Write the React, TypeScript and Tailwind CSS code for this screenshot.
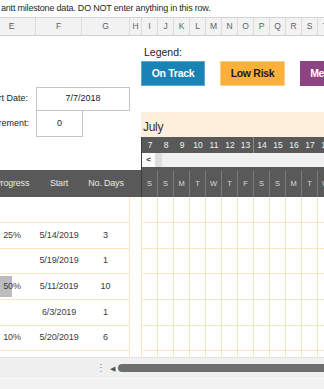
const days = [
  { n: "7", w: "S" },
  { n: "8", w: "S" },
  { n: "9", w: "M" },
  { n: "10", w: "T" },
  { n: "11", w: "W" },
  { n: "12", w: "T" },
  { n: "13", w: "F" },
  { n: "14", w: "S" },
  { n: "15", w: "S" },
  { n: "16", w: "M" },
  { n: "17", w: "T" },
  { n: "18", w: "W" },
];

const letters = ["I", "J", "K", "L", "M", "N", "O", "P", "Q", "R", "S", "T"];

const rows = [
  { p: "", s: "", d: "", bar: 0, h: "h-[26px]" },
  { p: "25%", s: "5/14/2019", d: "3", bar: 25, h: "h-[26px]" },
  { p: "", s: "5/19/2019", d: "1", bar: 0, h: "h-[25px]" },
  { p: "50%", s: "5/11/2019", d: "10", bar: 50, h: "h-[26px]" },
  { p: "", s: "6/3/2019", d: "1", bar: 0, h: "h-[26px]" },
  { p: "10%", s: "5/20/2019", d: "6", bar: 10, h: "h-[25px]" },
];

const GanttCells = () => (
  <>
    {days.map((d) => (
      <div key={d.n} className="h-full w-[16px] shrink-0 border-r border-[#fde4c4]" />
    ))}
  </>
);

const App = () => {
  return (
    <div className="relative h-[389px] w-[324px] overflow-hidden bg-white text-[#333] [font-family:'Liberation_Sans',Arial,sans-serif]">
      {/* formula bar */}
      <div className="flex h-[18px] items-center whitespace-nowrap border-b border-[#d4d4d4] pl-[1px] text-[9px] tracking-[-0.2px] text-[#1f1f1f]">
        antt milestone data. DO NOT enter anything in this row.
      </div>

      {/* column letters */}
      <div className="flex h-[18px] whitespace-nowrap border-b border-[#cfcfcf] bg-[#f2f2f2] text-[8.5px] text-[#5f5f5f]">
        <div className="-ml-[12px] flex w-[48px] shrink-0 items-center justify-center border-r border-[#dcdcdc]">E</div>
        <div className="flex w-[46px] shrink-0 items-center justify-center border-r border-[#dcdcdc]">F</div>
        <div className="flex w-[48px] shrink-0 items-center justify-center border-r border-[#dcdcdc]">G</div>
        <div className="flex w-[12px] shrink-0 items-center justify-center border-r border-[#dcdcdc]">H</div>
        {letters.map((l) => (
          <div key={l} className="flex w-[16px] shrink-0 items-center justify-center border-r border-[#dcdcdc]">
            {l}
          </div>
        ))}
      </div>

      <div className="flex">
        {/* left table */}
        <div className="-ml-[12px] flex w-[153px] shrink-0 flex-col">
          <div className="h-[51px]" />
          <div className="flex h-[24px] text-[9px] text-[#222]">
            <div className="flex w-[48px] shrink-0 items-center justify-end whitespace-nowrap pr-[8px]">Project Start Date:</div>
            <div className="flex w-[94px] shrink-0 items-center justify-center border border-[#c4c4c4]">7/7/2018</div>
          </div>
          <div className="flex h-[26px] text-[9px] text-[#222]">
            <div className="flex w-[48px] shrink-0 items-center justify-end whitespace-nowrap pr-[7px]">Scrolling Increment:</div>
            <div className="flex w-[47px] shrink-0 items-center justify-center border-x border-b border-[#c4c4c4]">0</div>
          </div>
          <div className="h-[33px]" />
          <div className="flex h-[27px] bg-[#595959] text-[9px] tracking-[-0.2px] text-[#e8e8e8]">
            <div className="flex w-[48px] shrink-0 items-center justify-center whitespace-nowrap">Progress</div>
            <div className="flex w-[46px] shrink-0 items-center justify-center">Start</div>
            <div className="flex w-[48px] shrink-0 items-center justify-center whitespace-nowrap">No. Days</div>
            <div className="w-[11px] shrink-0" />
          </div>
          {rows.map((r, i) => (
            <div key={i} className={`flex ${r.h} text-[9px] tracking-[-0.1px] text-[#3c3c3c]`}>
              <div className="flex w-[142px] shrink-0 border-b border-r border-[#fde4c4]">
                <div className="relative flex w-[48px] shrink-0 items-center justify-center">
                  {r.bar > 0 && (
                    <div className="absolute bottom-[2px] left-0 top-[2px] bg-[#bdbdbd]" style={{ width: `${r.bar}%` }} />
                  )}
                  <span className="relative">{r.p}</span>
                </div>
                <div className="flex w-[46px] shrink-0 items-center justify-center">{r.s}</div>
                <div className="flex w-[47px] shrink-0 items-center justify-center">{r.d}</div>
              </div>
              <div className="w-[11px] shrink-0" />
            </div>
          ))}
          <div className="flex h-[6px]">
            <div className="w-[142px] shrink-0 border-r border-[#fde4c4]" />
          </div>
        </div>

        {/* gantt side */}
        <div className="flex w-[200px] shrink-0 flex-col">
          <div className="h-[25px] pl-[3px] pt-[9px] text-[10.5px] leading-[14px] text-[#222]">Legend:</div>
          <div className="flex h-[25px] gap-[15px] whitespace-nowrap text-[10.5px] font-bold tracking-[-0.3px]">
            <div className="flex w-[64px] shrink-0 items-center justify-center border border-[#5aa9d2] bg-[#1a82b5] text-white">On Track</div>
            <div className="flex w-[65px] shrink-0 items-center justify-center border border-[#fccf86] bg-[#fbb03b] text-[#1a1a1a]">Low Risk</div>
            <div className="flex w-[64px] shrink-0 items-center justify-center bg-[#8c4484] text-white">Med Risk</div>
          </div>
          <div className="h-[26px]" />
          <div className="flex h-[25px] items-end bg-[#fdefdc] pb-[2px] pl-[2px] text-[12px] leading-[16px] tracking-[-0.3px] text-[#333]">July</div>
          <div className="flex h-[16px] border-l border-[#3d3d3d] bg-[#595959] text-[8.5px] text-[#f2f2f2]">
            {days.map((d, i) => (
              <div
                key={d.n}
                className={`flex w-[16px] shrink-0 items-center justify-center ${i === 6 ? "border-r border-[#8a8a8a]" : ""}`}
              >
                {d.n}
              </div>
            ))}
          </div>
          <div className="flex h-[14px] border-l border-[#3d3d3d] bg-[#f0f0f0]">
            <div className="flex w-[13px] shrink-0 items-center justify-center bg-[#fbfbfb] text-[8px] font-bold leading-none text-[#333]">
              &lt;
            </div>
            <div className="w-[7px] shrink-0 bg-[#dedede]" />
          </div>
          <div className="flex h-[30px] flex-col border-l border-[#3d3d3d] bg-[#595959]">
            <div className="h-[4px]" />
            <div className="flex flex-1 text-[7.5px] text-[#d9d9d9]">
              {days.map((d) => (
                <div key={d.n} className="flex w-[16px] shrink-0 items-center justify-center border-r border-[#7c7c7c]">
                  {d.w}
                </div>
              ))}
            </div>
          </div>
          {rows.map((r, i) => (
            <div key={i} className={`flex ${r.h} border-b border-l border-[#fde4c4]`}>
              <GanttCells />
            </div>
          ))}
          <div className="flex h-[6px] border-l border-[#fde4c4]">
            <GanttCells />
          </div>
        </div>
      </div>

      {/* bottom scroll bar + status */}
      <div className="flex h-[21px] items-center border-t border-[#e2e2e2] bg-[#f0f0f0]">
        <div className="w-[96px] shrink-0" />
        <div className="w-[8px] shrink-0 text-[10px] leading-none text-[#777]">⋮</div>
        <div className="w-[14px] shrink-0 pl-[6px] text-[7px] leading-none text-[#555]">◀</div>
        <div className="h-[8px] w-[220px] shrink-0 rounded-full bg-[#6e6e6e]" />
      </div>
      <div className="h-[11px] border-t border-[#fafafa] bg-[#f2f2f2]" />
    </div>
  );
};

export default App;
